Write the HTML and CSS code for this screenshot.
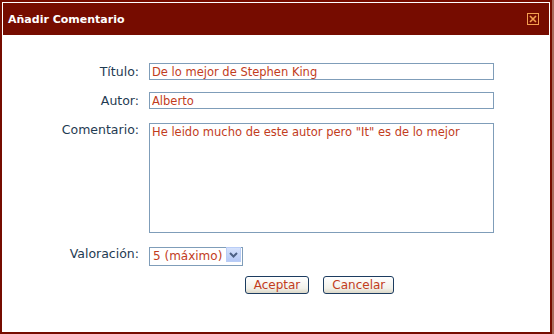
FILE: index.html
```html
<!DOCTYPE html>
<html>
<head>
<title>Añadir Comentario</title>
<link rel="stylesheet" href="styles.css">
</head>
<body>
<div class="dialog">
  <div class="dialog-header">
    <h1 class="dialog-title">Añadir Comentario</h1>
    <span class="close-btn">
      <svg width="8" height="8" viewBox="0 0 8 8"><path d="M1 1 L7 7 M7 1 L1 7" stroke="#f4a050" stroke-width="1.6"/></svg>
    </span>
  </div>

  <form class="comment-form">
    <label class="label" for="titulo">Título:</label>
    <input class="field" id="titulo" type="text" value="De lo mejor de Stephen King">

    <label class="label" for="autor">Autor:</label>
    <input class="field" id="autor" type="text" value="Alberto">

    <label class="label" for="comentario">Comentario:</label>
    <textarea class="field area" id="comentario">He leido mucho de este autor pero "It" es de lo mejor</textarea>

    <label class="label" for="valoracion">Valoración:</label>
    <div class="select-wrap">
      <select class="rating" id="valoracion">
        <option>5 (máximo)</option>
        <option>4</option>
        <option>3</option>
        <option>2</option>
        <option>1 (mínimo)</option>
      </select>
      <span class="select-arrow">
        <svg width="9" height="6" viewBox="0 0 9 6"><path d="M1 1 L4.5 4.5 L8 1" fill="none" stroke="#4d6185" stroke-width="2"/></svg>
      </span>
    </div>

    <div class="actions">
      <button type="button" class="btn">Aceptar</button>
      <button type="button" class="btn">Cancelar</button>
    </div>
  </form>
</div>
</body>
</html>
```

FILE: styles.css
```css
body {
  margin: 0;
  padding: 0;
  background-color: #a86a5c;
  font-family: "DejaVu Sans", Verdana, sans-serif;
}

.dialog {
  width: 546px;
  height: 328px;
  border: 2px solid #760c00;
  padding: 1px;
  background-color: #fff;
}

.dialog-header {
  height: 32px;
  background-color: #760c00;
  display: flex;
  align-items: center;
  justify-content: space-between;
  padding: 0 10px 0 5px;
}

.dialog-title {
  margin: 0;
  color: #fff;
  font-size: 11px;
  font-weight: bold;
}

.close-btn {
  width: 10px;
  height: 10px;
  border: 1px solid #f4a050;
  display: flex;
  align-items: center;
  justify-content: center;
}

.comment-form {
  display: grid;
  grid-template-columns: 136px 345px;
  column-gap: 10px;
  row-gap: 12px;
  padding-top: 28px;
}

.label {
  text-align: right;
  color: #1f3b52;
  font-size: 12.5px;
  line-height: 17px;
}

.field {
  box-sizing: border-box;
  width: 345px;
  height: 17px;
  margin: 0;
  padding: 0 2px;
  border: 1px solid #7f9db9;
  font-family: "DejaVu Sans", Verdana, sans-serif;
  font-size: 11.5px;
  color: #c23c1c;
  outline: none;
}

.area {
  height: 110px;
  resize: none;
  line-height: 15px;
  padding-top: 1px;
  margin-top: 2px;
}

.select-wrap {
  position: relative;
  width: 94px;
  height: 19px;
}

.rating {
  appearance: none;
  -webkit-appearance: none;
  box-sizing: border-box;
  width: 94px;
  height: 19px;
  margin: 0;
  padding: 0 3px;
  border: 1px solid #7f9db9;
  border-radius: 0;
  background-color: #fff;
  font-family: "DejaVu Sans", Verdana, sans-serif;
  font-size: 12px;
  color: #c23c1c;
}

.select-arrow {
  position: absolute;
  top: 2px;
  right: 2px;
  width: 15px;
  height: 15px;
  box-sizing: border-box;
  border: 1px solid #b9cdf6;
  background: linear-gradient(#d6e2fc, #b5c9f6);
  display: flex;
  align-items: center;
  justify-content: center;
}

.actions {
  grid-column: 2;
  display: flex;
  justify-content: center;
  gap: 14px;
  padding-right: 4px;
}

.btn {
  height: 18px;
  padding: 0 8px;
  border: 1px solid #1c3c60;
  border-radius: 3px;
  background: linear-gradient(#ffffff, #f2f1ea 70%, #dcd8c8);
  font-family: "DejaVu Sans", Verdana, sans-serif;
  font-size: 12px;
  color: #c23c1c;
  line-height: 16px;
}
```
